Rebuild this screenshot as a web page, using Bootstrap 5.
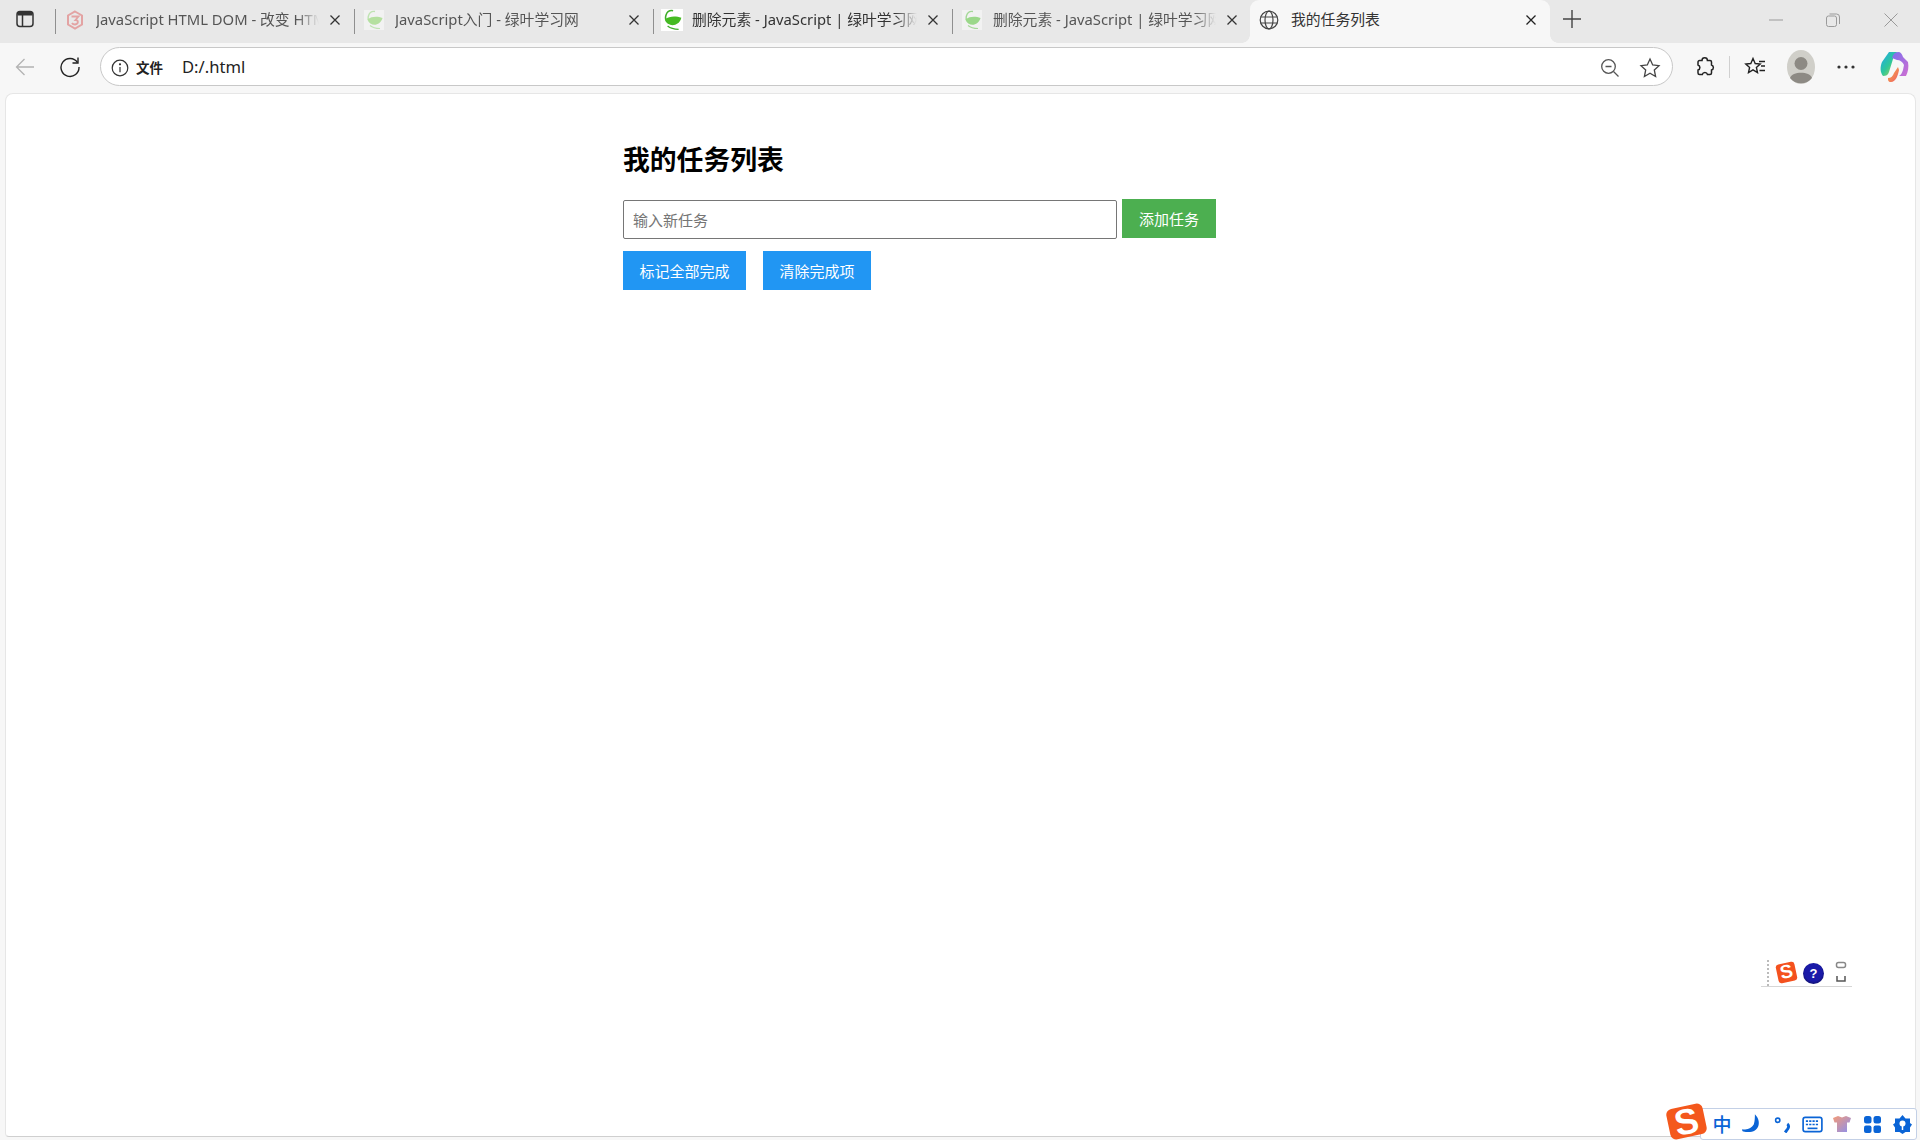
<!DOCTYPE html>
<html lang="zh-CN">
<head>
<meta charset="utf-8">
<title>我的任务列表</title>
<link href="https://cdn.jsdelivr.net/npm/bootstrap@5.3.0/dist/css/bootstrap.min.css" rel="stylesheet">
<style>
html,body{height:100%;overflow:hidden}
body{background:#f7f7f7;font-family:"Noto Sans","Noto Sans CJK SC",sans-serif;color:#000;width:1920px;height:1140px;position:relative}
.win{height:1140px}
.strip{height:43px;background:#e8e8e8;flex:none}
.strip-lead{width:55px;flex:none;height:100%;padding:0 5px 5px 0}
.tabx{width:299px;flex:none;height:100%;position:relative;padding:0 0 4px 10px;color:#555;font-size:14.8px}
.tabx::before{content:"";position:absolute;left:0;top:9px;height:25px;width:1px;background:#8f8f8f}
.tabx.first-on{color:#333}
.tabx.on{width:300px;margin-left:-1px;background:#f7f7f7;border-radius:9px 9px 0 0;padding-left:9px;color:#333}
.tabx.on::before{left:-8px;top:auto;bottom:0;width:8px;height:8px;background:radial-gradient(circle at 0 0,transparent 7.5px,#f7f7f7 8px)}
.tabx.on::after{content:"";position:absolute;right:-8px;bottom:0;width:8px;height:8px;background:radial-gradient(circle at 100% 0,transparent 7.5px,#f7f7f7 8px)}
.fav{width:20px;height:20px;flex:none;margin-right:11px}
.fav-big{width:22px;height:22px;margin-right:9px;margin-left:-2px;background:#fff}
.tab-title{flex:1;white-space:nowrap;overflow:hidden;min-width:0;-webkit-mask-image:linear-gradient(90deg,#000 calc(100% - 22px),transparent);mask-image:linear-gradient(90deg,#000 calc(100% - 22px),transparent);line-height:1;padding:3px 0}
.on .tab-title{-webkit-mask-image:none;mask-image:none}
.xbtn{width:12px;height:12px;flex:none;margin:0 13px 0 10px}
.plus{width:20px;height:20px;margin:0 0 5px 12px;flex:none}
.winctl{position:absolute;top:0;right:0;height:39px;width:175px}
.winctl svg{width:14px;height:14px}
.toolbar{height:50px;flex:none;padding:5px 0 8px 0}
.tb-slot{width:50px;flex:none;justify-content:center}
.tb-slot.reload{padding-right:10px}
.omni{width:1573px;height:39px;flex:none;background:#fff;border:1px solid #c8c8c8;border-radius:20px;padding:2px 11px 0 10px;font-size:16px}
.omni-tag{font-weight:700;font-size:13.5px;margin-left:7px;margin-right:19px;color:#222;font-family:"Noto Sans CJK SC",sans-serif}
.omni-url{color:#222;font-size:16.6px}
.omni-end{margin-left:auto;gap:19px}
.tb-right{width:247px;flex:none;position:relative}
.tb-ico{flex:none;display:block}
.vsep{width:1px;height:22px;background:#d0d0d0;flex:none}
.pagebox{flex:1;background:#fff;margin:0 4px 3px 5px;border:1px solid #e6e6e6;border-bottom-color:#cfcfcf;border-radius:8px 8px 4px 4px;padding:46px 0 0 617px;min-height:0;font-family:"Noto Sans CJK SC","Noto Sans",sans-serif}
.task-h{font-size:26.8px;font-weight:700;line-height:37px;margin:0 0 22px 0;color:#000}
.task-wrap{width:600px}
.task-in{width:494px;height:39px;border:1px solid #767676;border-radius:2px;padding:0 9px;font-size:15px;flex:none;margin-top:1px;box-shadow:none;background:#fff}
.task-in::placeholder{color:#757575;opacity:1}
.btn-flat{border:0;border-radius:0;color:#fff;font-size:15px;height:39px;padding:0 16px;line-height:37px;flex:none;white-space:nowrap}
.btn-flat:hover{color:#fff}
.btn-g{background:#4caf50;width:94px;padding:0;margin-left:5px}
.btn-g:hover{background:#4caf50}
.btn-b{background:#2196f3}
.btn-b:hover{background:#2196f3}
.w1{width:123px;padding:0}
.w2{width:108px;padding:0;margin-left:17px}
.row-two{margin-top:12px}
.float-s{position:absolute;left:1761px;top:958px;width:91px;height:29px;border-bottom:1px solid #d6d6d6}
.float-s .dots{position:absolute;left:6px;top:2px;height:26px;border-left:2px dotted #bbb}
.s-logo{position:absolute;background:#f4511e;color:#fff;font-family:"Liberation Sans",sans-serif;font-weight:700;display:flex;align-items:center;justify-content:center;transform:rotate(-12deg)}
.float-s .s-logo{left:16px;top:5px;width:19px;height:19px;font-size:19px;border-radius:3px}
.qmark{position:absolute;left:42px;top:5px;width:21px;height:21px;border-radius:50%;background:radial-gradient(circle at 50% 45%,#1a1aa8 55%,#121270 75%,#8890a0 100%);color:#fff;font:700 13px/21px "Liberation Sans",sans-serif;text-align:center}
.float-s svg{position:absolute;left:74px;top:3px}
.ime{position:absolute;left:1700px;top:1108px;width:217px;height:32px;background:#fff;border:1px solid #c3d0e6;border-radius:3px;color:#0a64d6}
.ime .s-logo{left:-33px;top:-3px;width:37px;height:31px;font-size:36px;border-radius:6px;background:#f4581c;z-index:1}
.ime-items{height:100%;padding-left:6px}
.ime-cell{width:30px;flex:none;display:flex;justify-content:center;align-items:center;height:100%;font-size:19px;font-weight:500;font-family:"Noto Sans CJK SC",sans-serif}
</style>
</head>
<body>
<div class="win d-flex flex-column">
  <div class="strip d-flex align-items-center position-relative">
    <div class="strip-lead d-flex align-items-center justify-content-center">
      <svg width="18" height="18" viewBox="0 0 18 18" fill="none"><rect x="1" y="1.500" width="16" height="15" rx="3" stroke="#333" stroke-width="1.500"/><path d="M1.500 3.500a2 2 0 0 1 2-2h11a2 2 0 0 1 2 2v2h-15z" fill="#333"/><path d="M6.500 5v11" stroke="#333" stroke-width="1.500"/></svg>
    </div>
    <div class="tabx d-flex align-items-center">
      <svg class="fav" viewBox="0 0 20 20" fill="none"><path d="M10 1.500l7 4v9l-7 4-7-4v-9z" stroke="#e3a3a3" stroke-width="2"/><path d="M6.500 6.500h7l-3 3.500c3 0 3.500 4-.5 4.500-1.500 0-2.500-.5-3-1.500" stroke="#e3a3a3" stroke-width="1.800"/></svg>
      <span class="tab-title">JavaScript HTML DOM - 改变 HTML</span>
      <svg class="xbtn" viewBox="0 0 12 12"><path d="M1.500 1.500l9 9M10.500 1.500l-9 9" stroke="#333" stroke-width="1.300"/></svg>
    </div>
    <div class="tabx d-flex align-items-center">
      <svg class="fav" viewBox="0 0 20 20" fill="none"><rect width="20" height="20" fill="#f2f2f2"/><path d="M11 1.500C4 .5 2 10 7 13" stroke="#bfe3b2" stroke-width="1.400"/><path d="M3.500 9.500C8 6 14 6.500 18.500 8c-1.500 6-8 8.500-12 5.500z" fill="#b5e0a0"/><path d="M6 15.500c3 2.500 6 3 10 3" stroke="#bfe3b2" stroke-width="1.200"/></svg>
      <span class="tab-title">JavaScript入门 - 绿叶学习网</span>
      <svg class="xbtn" viewBox="0 0 12 12"><path d="M1.500 1.500l9 9M10.500 1.500l-9 9" stroke="#333" stroke-width="1.300"/></svg>
    </div>
    <div class="tabx first-on d-flex align-items-center">
      <svg class="fav fav-big" viewBox="0 0 20 20" fill="none"><path d="M11 1.500C4 .5 2 10 7 13" stroke="#3fae2a" stroke-width="1.400"/><path d="M3.500 9.500C8 6 14 6.500 18.500 8c-1.500 6-8 8.500-12 5.500z" fill="#45bb22"/><path d="M6 15.500c3 2.500 6 3 10 3" stroke="#3fae2a" stroke-width="1.200"/></svg>
      <span class="tab-title">删除元素 - JavaScript | 绿叶学习网</span>
      <svg class="xbtn" viewBox="0 0 12 12"><path d="M1.500 1.500l9 9M10.500 1.500l-9 9" stroke="#333" stroke-width="1.300"/></svg>
    </div>
    <div class="tabx d-flex align-items-center">
      <svg class="fav" viewBox="0 0 20 20" fill="none"><rect width="20" height="20" fill="#f2f2f2"/><path d="M11 1.500C4 .5 2 10 7 13" stroke="#a5d898" stroke-width="1.400"/><path d="M3.500 9.500C8 6 14 6.500 18.500 8c-1.500 6-8 8.500-12 5.500z" fill="#9bd88a"/><path d="M6 15.500c3 2.500 6 3 10 3" stroke="#a5d898" stroke-width="1.200"/></svg>
      <span class="tab-title">删除元素 - JavaScript | 绿叶学习网</span>
      <svg class="xbtn" viewBox="0 0 12 12"><path d="M1.500 1.500l9 9M10.500 1.500l-9 9" stroke="#333" stroke-width="1.300"/></svg>
    </div>
    <div class="tabx on d-flex align-items-center">
      <svg class="fav" style="margin-right:12px" viewBox="0 0 20 20" fill="none" stroke="#444" stroke-width="1.200"><circle cx="10" cy="10" r="8.800"/><ellipse cx="10" cy="10" rx="4" ry="8.800"/><path d="M1.500 7h17M1.500 13h17"/></svg>
      <span class="tab-title">我的任务列表</span>
      <svg class="xbtn" viewBox="0 0 12 12"><path d="M1.500 1.500l9 9M10.500 1.500l-9 9" stroke="#222" stroke-width="1.300"/></svg>
    </div>
    <svg class="plus" viewBox="0 0 20 20"><path d="M10 1v18M1 10h18" stroke="#444" stroke-width="1.400"/></svg>
    <div class="winctl d-flex align-items-center">
      <svg class="position-absolute" style="left:24px" viewBox="0 0 14 14"><path d="M0 7h14" stroke="#9a9a9a" stroke-width="1"/></svg>
      <svg class="position-absolute" style="left:81px" viewBox="0 0 14 14" fill="none" stroke="#9a9a9a"><rect x=".5" y="3" width="10" height="10.500" rx="2"/><path d="M3.500 1h7a3 3 0 0 1 3 3v7"/></svg>
      <svg class="position-absolute" style="left:139px" viewBox="0 0 14 14"><path d="M.5 .5l13 13M13.500 .5l-13 13" stroke="#9a9a9a" stroke-width="1"/></svg>
    </div>
  </div>

  <div class="toolbar d-flex align-items-center">
    <div class="tb-slot d-flex">
      <svg width="20" height="20" viewBox="0 0 20 20" fill="none" stroke="#b3b3b3" stroke-width="1.300"><path d="M19 10H1.500M9.500 2l-8 8 8 8"/></svg>
    </div>
    <div class="tb-slot reload d-flex">
      <svg width="22" height="22" viewBox="0 0 22 22" fill="none" stroke="#222" stroke-width="1.400"><path d="M18.500 6.500A9 9 0 1 0 20 11"/><path d="M19 1.500v5.500h-5.500"/></svg>
    </div>
    <div class="omni d-flex align-items-center">
      <svg width="18" height="18" viewBox="0 0 18 18" fill="none" stroke="#333" stroke-width="1.200"><circle cx="9" cy="9" r="7.800"/><path d="M9 8v5.200"/><circle cx="9" cy="5.300" r=".5" fill="#333"/></svg>
      <span class="omni-tag">文件</span>
      <span class="omni-url">D:/.html</span>
      <div class="omni-end d-flex align-items-center">
        <svg width="20" height="20" viewBox="0 0 20 20" fill="none" stroke="#555" stroke-width="1.300"><circle cx="8.500" cy="8.500" r="6.800"/><path d="M5.500 8.500h6M13.500 13.500l5 5"/></svg>
        <svg width="22" height="22" viewBox="0 0 22 22" fill="none" stroke="#444" stroke-width="1.300"><path d="M11 2l2.700 6 6.300.7-4.700 4.300 1.300 6.500L11 16.200 5.400 19.500l1.300-6.500L2 8.700 8.300 8z"/></svg>
      </div>
    </div>
    <div class="tb-right d-flex align-items-center">
      <svg class="tb-ico position-absolute" style="left:21px" width="21" height="22" viewBox="0 0 21 22" fill="none" stroke="#222" stroke-width="1.500"><path d="M8 4.500a2.700 2.700 0 0 1 5.400 0H16a1.500 1.500 0 0 1 1.500 1.500v3a2.600 2.600 0 0 1 0 5V17a1.500 1.500 0 0 1-1.500 1.500h-2.500a2.700 2.700 0 0 0-5.200 0H5.500A1.500 1.500 0 0 1 4 17v-3a2.600 2.600 0 0 0 0-5V6a1.500 1.500 0 0 1 1.500-1.500z"/></svg>
      <div class="vsep position-absolute" style="left:56px"></div>
      <svg class="tb-ico position-absolute" style="left:71px" width="22" height="22" viewBox="0 0 22 22" fill="none" stroke="#222" stroke-width="1.400"><path d="M9 2.500l2.200 5 5 .5-3.800 3.400 1.100 5.100L9 13.900 4.500 16.500l1.100-5.100L1.800 8l5-.5z"/><path d="M15 5.500h6M17 10h4M15.500 14.500H21"/></svg>
      <svg class="tb-ico position-absolute" style="left:114px" width="28" height="34" viewBox="0 0 28 34"><ellipse cx="14" cy="17" rx="14" ry="17" fill="#d0cfc9"/><circle cx="14" cy="13.500" r="6.500" fill="#8d8a84"/><path d="M3 28c2-7 20-7 22 0-5 7-17 7-22 0z" fill="#8d8a84"/></svg>
      <svg class="tb-ico position-absolute" style="left:164px" width="18" height="4" viewBox="0 0 18 4" fill="#333"><circle cx="2" cy="2" r="1.600"/><circle cx="9" cy="2" r="1.600"/><circle cx="16" cy="2" r="1.600"/></svg>
      <svg class="tb-ico position-absolute" style="left:207px" width="29" height="32" viewBox="0 0 29 32" fill="none"><defs><linearGradient id="cp1" x1="0" y1="0" x2="1" y2="1"><stop offset="0" stop-color="#1fa7f0"/><stop offset=".5" stop-color="#2fc79a"/><stop offset="1" stop-color="#d7d634"/></linearGradient><linearGradient id="cp2" x1="0" y1="0" x2="1" y2="1"><stop offset="0" stop-color="#7a6ff0"/><stop offset="1" stop-color="#d06fd0"/></linearGradient><linearGradient id="cp3" x1="0" y1="0" x2="1" y2="1"><stop offset="0" stop-color="#f7b23c"/><stop offset="1" stop-color="#ee5a6a"/></linearGradient></defs><path d="M9 1h9c-3 1-4 3-5 7L9 21c-1 3-3 4-6 4-3-4-3-9-1-14z" fill="url(#cp1)"/><path d="M12 7c1-4 3-6 6-6 3 0 4 2 5 5l5 5c1 5 0 10-2 14h-7c2-1 3-3 4-6l1-5c-1-3-4-5-7-5z" fill="url(#cp2)"/><path d="M8 27c3 0 5-2 6-5l4-6 1 3c-1 5-3 12-8 12-3 0-3-2-3-4z" fill="url(#cp3)"/></svg>
    </div>
  </div>

  <main class="pagebox">
    <div class="task-wrap">
      <h1 class="task-h">我的任务列表</h1>
      <div class="d-flex align-items-start">
        <input class="task-in form-control" type="text" placeholder="输入新任务">
        <button class="btn btn-flat btn-g" type="button">添加任务</button>
      </div>
      <div class="d-flex row-two">
        <button class="btn btn-flat btn-b w1" type="button">标记全部完成</button>
        <button class="btn btn-flat btn-b w2" type="button">清除完成项</button>
      </div>
    </div>
  </main>
</div>

<div class="float-s">
  <div class="dots"></div>
  <div class="s-logo">S</div>
  <div class="qmark">?</div>
  <svg width="12" height="22" viewBox="0 0 12 22" fill="none" stroke="#555" stroke-width="1.500"><rect x="1.500" y="1.500" width="9" height="5" rx="2" stroke="#888"/><path d="M2 15v5h8v-5"/></svg>
</div>

<div class="ime">
  <div class="s-logo">S</div>
  <div class="ime-items d-flex align-items-center">
    <div class="ime-cell">中</div>
    <div class="ime-cell"><svg width="22" height="22" viewBox="0 0 19 19"><path d="M12 1c7 7 3 18-10 15-1 0-1-1-1-2 5 1 8-1 10-4 1-3 1-6 1-9z" fill="#0a64d6"/></svg></div>
    <div class="ime-cell"><svg width="17" height="17" viewBox="0 0 16 16" fill="none" stroke="#0a64d6"><circle cx="3.500" cy="4" r="2" stroke-width="1.500"/><path d="M12.500 7.500c1.500 1 1.500 3 .5 4.500L10.500 15.500" stroke-width="2.800"/></svg></div>
    <div class="ime-cell"><svg width="21" height="17" viewBox="0 0 19 15" fill="none"><rect x="1" y="1" width="17" height="13" rx="2" stroke="#0a64d6" stroke-width="1.500"/><path d="M3.500 4.500h12M3.500 7.500h12" stroke="#0a64d6" stroke-width="1.500" stroke-dasharray="2 1"/><path d="M5 11h9" stroke="#0a64d6" stroke-width="1.500"/></svg></div>
    <div class="ime-cell"><svg width="20" height="18" viewBox="0 0 20 18"><defs><linearGradient id="shirt" x1="0" y1="0" x2="1" y2="1"><stop offset="0" stop-color="#f59a76"/><stop offset="1" stop-color="#8a8ff0"/></linearGradient></defs><path d="M6 1l4 1.500L14 1l5 2-1.500 4.500H15V17H5V7.500H2.500L1 3z" fill="url(#shirt)"/></svg></div>
    <div class="ime-cell"><svg width="17" height="17" viewBox="0 0 17 17" fill="#0a64d6"><rect x="0" y="0" width="7.500" height="7.500" rx="2.500"/><rect x="9.500" y="0" width="7.500" height="7.500" rx="2.500"/><rect x="0" y="9.500" width="7.500" height="7.500" rx="2"/><rect x="9.500" y="9.500" width="7.500" height="7.500" rx="2"/></svg></div>
    <div class="ime-cell"><svg width="19" height="19" viewBox="0 0 19 19"><path d="M9.500 0l3 3.500 4.500 0 0 4.500 2 1.500-2 3v4.500h-4.500l-3 2-3-2H2v-4.500l-2-3 2-1.500V3.500h4.500z" fill="#0a64d6"/><circle cx="9.500" cy="8.500" r="3" fill="#fff"/><path d="M9.500 10v5" stroke="#fff" stroke-width="1.500"/></svg></div>
  </div>
</div>
<script src="https://cdn.jsdelivr.net/npm/bootstrap@5.3.0/dist/js/bootstrap.bundle.min.js"></script>
</body>
</html>
